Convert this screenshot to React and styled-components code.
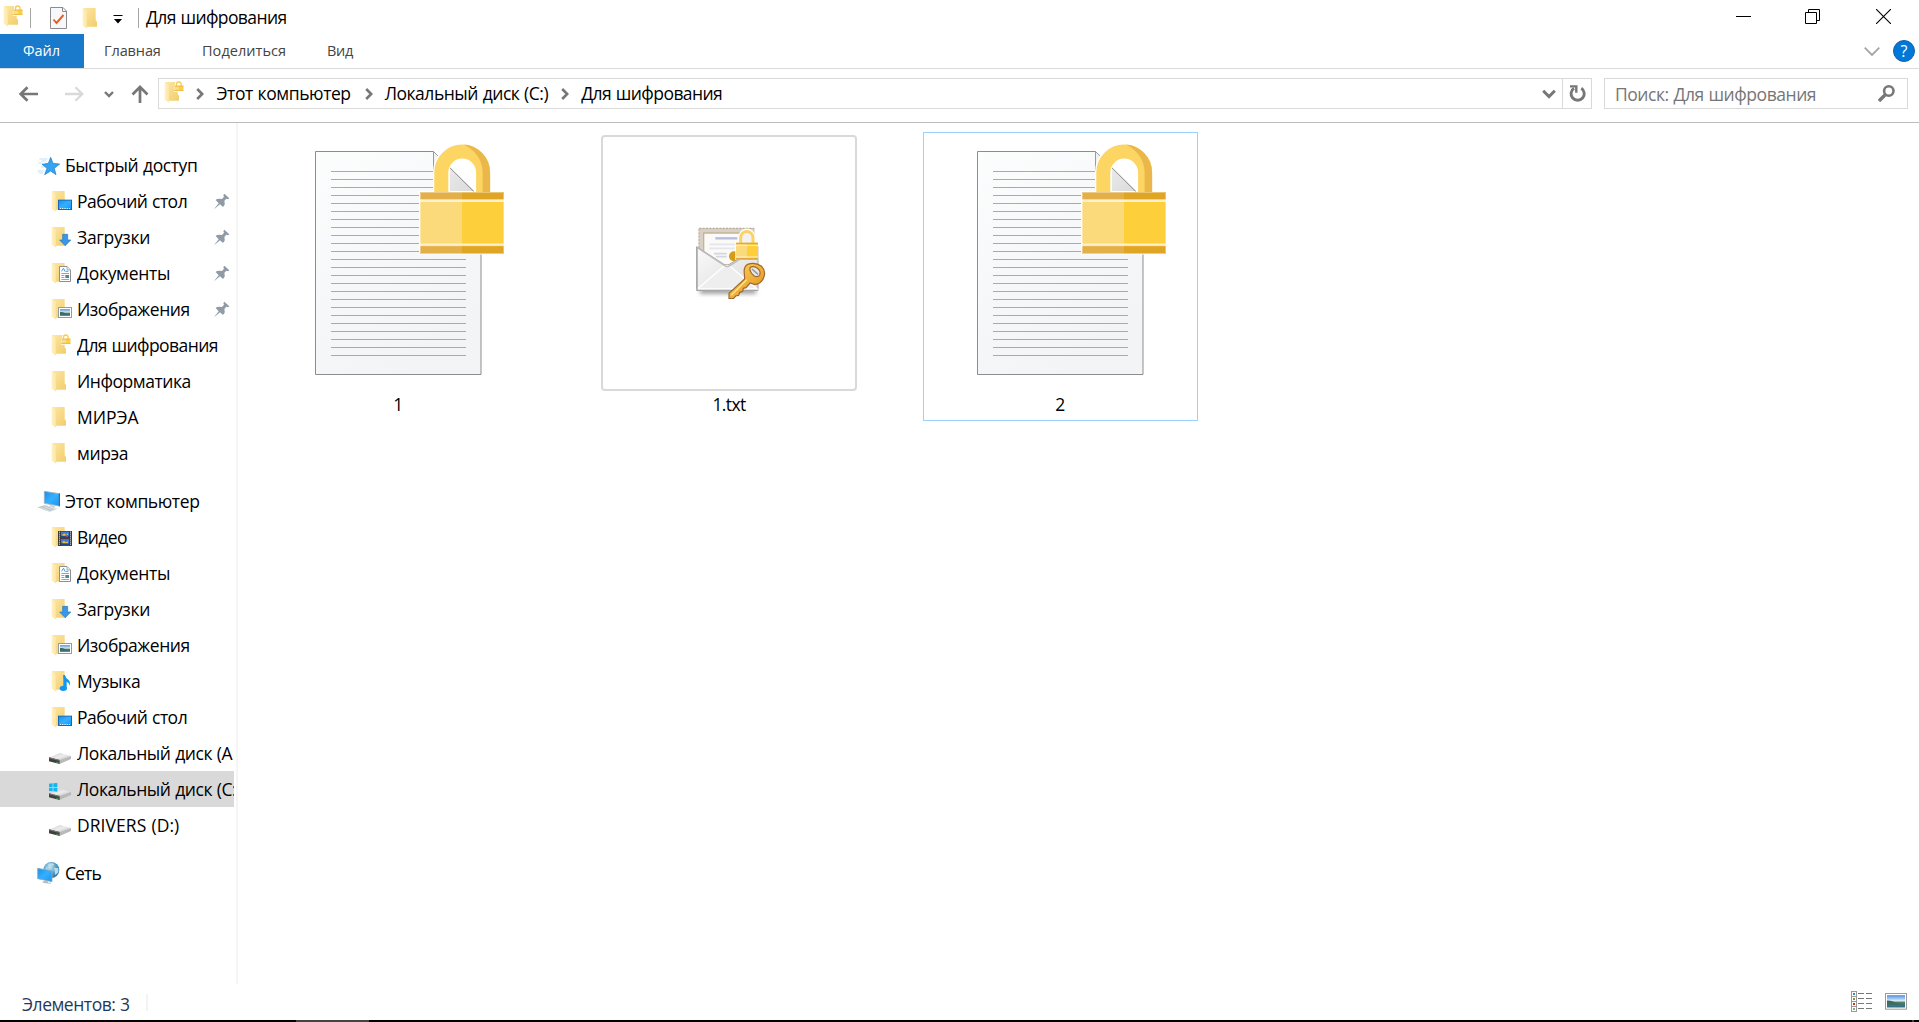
import React from "react";
import styled, { createGlobalStyle } from "styled-components";

const GlobalStyle = createGlobalStyle`
  * { box-sizing: border-box; }
  html, body { margin: 0; padding: 0; background: #fff; overflow: hidden; }
  body { font-family: "Open Sans", "Noto Sans", sans-serif; color: #000; }
  svg { display: block; flex: none; }
`;

const Window = styled.div`
  width: 100vw;
  height: 100vh;
  display: flex;
  flex-direction: column;
  background: #fff;
`;

const Text = styled.span`
  font-size: ${(p) => p.$size || 17.5}px;
  line-height: 24px;
  letter-spacing: ${(p) => p.$spacing ?? -0.42}px;
  word-spacing: 0.6px;
  white-space: nowrap;
`;
const RaisedText = styled(Text)`
  padding-bottom: 2px;
`;

/* ---------- title bar ---------- */
const TitleBar = styled.header`
  height: 34px;
  padding: 2px 28px 0 3px;
  display: flex;
  align-items: center;
`;
const AppIcon = styled.div`
  margin-bottom: 4px;
`;
const Separator = styled.i`
  width: 1px;
  height: 20px;
  background: #a5a5a5;
  margin: 0 ${(p) => p.$after}px 0 ${(p) => p.$before}px;
`;
const CheckButton = styled.div`
  margin-right: 15px;
`;
const MenuArrow = styled.div`
  margin: 3px 15px 0 7px;
`;
const WindowControls = styled.div`
  margin-left: auto;
  margin-bottom: 3px;
  display: flex;
`;
const ControlIcon = styled.div`
  margin-left: ${(p) => p.$gap}px;
`;

/* ---------- ribbon ---------- */
const Ribbon = styled.nav`
  height: 35px;
  display: flex;
  align-items: stretch;
  border-bottom: 1px solid #dadbdc;
  padding-right: 4px;
`;
const FileTab = styled.div`
  width: 84px;
  background: #1979ca;
  color: #fff;
  display: flex;
  align-items: center;
  justify-content: center;
  padding-right: 1px;
`;
const Tab = styled.div`
  width: ${(p) => p.$width}px;
  padding-left: 20px;
  color: #444;
  display: flex;
  align-items: center;
`;
const RibbonTools = styled.div`
  margin-left: auto;
  display: flex;
  align-items: center;
  gap: 13px;
`;
const HelpButton = styled.div`
  width: 22px;
  height: 22px;
  border-radius: 50%;
  background: #0178d7;
  border: 1px solid #1060a8;
  color: #fff;
  font-size: 16px;
  line-height: 20px;
  text-align: center;
`;

/* ---------- address row ---------- */
const NavRow = styled.div`
  height: 54px;
  padding: 0 11px 4px 19px;
  display: flex;
  align-items: center;
  border-bottom: 1px solid #bcbcbc;
`;
const Arrow = styled.div`
  margin-right: ${(p) => p.$gap}px;
  padding-top: 1px;
`;
const AddressBox = styled.div`
  flex: 1;
  height: 31px;
  border: 1px solid #d9d9d9;
  display: flex;
  align-items: center;
  padding-left: 5px;
`;
const AddressIcon = styled.div`
  padding-bottom: 3px;
`;
const Crumb = styled.div`
  display: flex;
  align-items: center;
  gap: ${(p) => p.$gap}px;
  margin-left: ${(p) => p.$before}px;
`;
const HistoryArrow = styled.div`
  margin-left: auto;
  margin-right: 6px;
`;
const RefreshButton = styled.div`
  width: 29px;
  height: 29px;
  border-left: 1px solid #d9d9d9;
  padding-left: 6px;
  display: flex;
  align-items: center;
`;
const SearchBox = styled.div`
  width: 304px;
  height: 31px;
  margin-left: 12px;
  border: 1px solid #d9d9d9;
  padding: 0 12px 0 10px;
  color: #767676;
  display: flex;
  align-items: center;
  justify-content: space-between;
`;

/* ---------- body ---------- */
const Body = styled.div`
  flex: 1;
  display: flex;
  min-height: 0;
`;
const Sidebar = styled.aside`
  width: 238px;
  padding-top: 24px;
  border-right: 2px solid #f5f5f5;
  margin-bottom: 1px;
`;
const Group = styled.section`
  width: 234px;
  margin-bottom: 12px;
`;
const Row = styled.div`
  height: 36px;
  display: flex;
  align-items: center;
  overflow: hidden;
  padding-left: ${(p) => (p.$root ? 36 : p.$drive ? 48 : 51)}px;
  gap: ${(p) => (p.$root ? 4 : p.$drive ? 5 : 2)}px;
  background: ${(p) => (p.$selected ? "#d9d9d9" : "transparent")};
`;
const RowLabel = styled(Text)`
  flex: 1;
  min-width: 0;
  overflow: hidden;
`;
const PinSlot = styled.div`
  margin-right: 4px;
`;

const Files = styled.main`
  flex: 1;
  display: flex;
  align-items: flex-start;
  gap: 56px;
  padding: 9px 0 0 23px;
`;
const Tile = styled.div`
  width: 275px;
  height: 289px;
  border: 1px solid ${(p) => (p.$focused ? "#99d1ff" : "transparent")};
  padding: 2px 0 0 8px;
  display: flex;
  flex-direction: column;
`;
const Thumb = styled.div`
  width: 256px;
  height: 256px;
  border: ${(p) => (p.$framed ? "2px solid #d9d9d9" : "0")};
  border-radius: 4px;
  padding-left: ${(p) => (p.$framed ? 4 : 0)}px;
  display: flex;
  align-items: center;
  justify-content: center;
`;
const FileName = styled(Text)`
  width: 256px;
  padding-top: 1px;
  text-align: center;
`;

/* ---------- status bar ---------- */
const StatusBar = styled.footer`
  height: 35px;
  padding: 0 12px 0 22px;
  display: flex;
  align-items: center;
  color: #1e395b;
`;
const StatusDivider = styled.i`
  width: 2px;
  height: 17px;
  margin-left: auto;
  background: #f3f3f3;
`;
const StatusInfo = styled.div`
  width: 126px;
  display: flex;
  align-items: center;
`;
const StatusText = styled(Text)`
  padding-top: 2px;
`;
const ViewModes = styled.div`
  margin-left: auto;
  display: flex;
  align-items: center;
  gap: 13px;
  padding-bottom: 3px;
`;
const TaskbarEdge = styled.div`
  height: 2px;
  background: #000;
  display: flex;
  justify-content: space-between;
  padding: 0 5px 0 296px;
`;
const EdgeMark = styled.i`
  width: ${(p) => p.$width}px;
  height: 2px;
  background: #444;
`;

/* ---------- small icons ---------- */
const Defs = () => (
  <svg width="0" height="0" aria-hidden="true">
    <defs>
      <linearGradient id="folderBack" x1="0" y1="0" x2="1" y2="1">
        <stop offset="0" stopColor="#fde7a5" /><stop offset="1" stopColor="#f2cd6b" />
      </linearGradient>
      <linearGradient id="folderFlap" x1="0" y1="0" x2="1" y2="0">
        <stop offset="0" stopColor="#fff2c4" /><stop offset="1" stopColor="#fce49c" />
      </linearGradient>
      <linearGradient id="screen" x1="0" y1="0" x2="1" y2="1">
        <stop offset="0" stopColor="#1590f0" /><stop offset=".5" stopColor="#35b0ff" /><stop offset="1" stopColor="#1596f5" />
      </linearGradient>
      <linearGradient id="driveTop" x1="0" y1="0" x2="1" y2="1">
        <stop offset="0" stopColor="#c9c9c9" /><stop offset=".5" stopColor="#ececec" /><stop offset="1" stopColor="#b5b5b5" />
      </linearGradient>
      <linearGradient id="paper" x1="0" y1="0" x2=".5" y2="1">
        <stop offset="0" stopColor="#fcfdfd" /><stop offset=".5" stopColor="#f7f8f9" /><stop offset="1" stopColor="#f3f4f6" />
      </linearGradient>
      <linearGradient id="fold" x1="0" y1="0" x2="1" y2="1">
        <stop offset="0" stopColor="#f4f4f4" /><stop offset="1" stopColor="#d6d6d6" />
      </linearGradient>
      <linearGradient id="photo" x1="0" y1="0" x2="0" y2="1">
        <stop offset="0" stopColor="#4a8fe0" /><stop offset=".45" stopColor="#d9ecfa" /><stop offset=".6" stopColor="#4d7d62" /><stop offset="1" stopColor="#2f6d94" />
      </linearGradient>
      <linearGradient id="envelope" x1="0" y1="0" x2="1" y2="1">
        <stop offset="0" stopColor="#fafafa" /><stop offset="1" stopColor="#dcdcdc" />
      </linearGradient>
      <linearGradient id="keyGold" x1="0" y1="0" x2="1" y2="1">
        <stop offset="0" stopColor="#ffd95e" /><stop offset="1" stopColor="#e08a1c" />
      </linearGradient>
      <radialGradient id="globe" cx=".4" cy=".35" r=".7">
        <stop offset="0" stopColor="#c4e6f4" /><stop offset=".6" stopColor="#4f9cc4" /><stop offset="1" stopColor="#2f6f9c" />
      </radialGradient>
      <filter id="soft" x="-20%" y="-50%" width="140%" height="200%"><feGaussianBlur stdDeviation="6" /></filter>
    </defs>
  </svg>
);

const Picture = ({ x, y, w, h }) => (
  <g>
    <rect x={x} y={y} width={w} height={h} fill="#fff" stroke="#9a9a9a" strokeWidth="3" />
    <rect x={x + 4.5} y={y + 5} width={w - 9} height={h - 10} fill="url(#photo)" />
    <path d={`M${x + 4.5} ${y + h * 0.45}q${w * 0.2} -1 ${w * 0.4} ${h * 0.13}l${w * 0.3} ${h * 0.12}h-${w * 0.7}z`} fill="#3f6b5c" />
  </g>
);

const overlays = {
  lock: (
    <g>
      <path d="M30 16h3v-4a11 11 0 0 1 24 0v4h3v19H30z" fill="#fff" />
      <path d="M37.500 18v-5a7 7 0 0 1 14 0v5" fill="none" stroke="#f6cb58" strokeWidth="4" />
      <rect x="31" y="17" width="27" height="16" fill="#fbdc84" />
      <rect x="44.500" y="17" width="13.500" height="16" fill="#fccf45" />
      <path d="M31 18.500h27M31 31.500h27" stroke="#edbd4b" strokeWidth="3" />
    </g>
  ),
  desktop: (
    <g>
      <rect x="22.500" y="33.500" width="39" height="28" fill="url(#screen)" stroke="#1268b4" strokeWidth="3" />
      <path d="M27 58.500h3M33 58.500h18M54 58.500h3" stroke="#fff" strokeWidth="2.500" strokeDasharray="3 2" />
    </g>
  ),
  downloads: <path d="M35 28h15v17h9.500L42.500 62 26 45h9z" fill="#3a97e8" stroke="#2477c0" strokeWidth="2" />,
  documents: (
    <g>
      <path d="M25.500 16.500H48l10.500 10.500v34.500h-33z" fill="#fff" stroke="#8e8e8e" strokeWidth="3" />
      <path d="M48 17v10h10" fill="#eee" stroke="#8e8e8e" strokeWidth="2" />
      <path d="M32 31l4-8h3l2 8M43 31h9" stroke="#2a8fdc" strokeWidth="2.500" fill="none" />
      <path d="M31 37.500h23M31 43.500h9M31 49.500h9M31 55.500h23" stroke="#4aa0e0" strokeWidth="2.500" />
      <rect x="43" y="42" width="11" height="9" fill="#4f8a8a" />
    </g>
  ),
  pictures: <Picture x={22.5} y={31.5} w={39} h={30} />,
  video: (
    <g>
      <rect x="21" y="18" width="42" height="45" fill="#3c3c3c" />
      <rect x="30" y="20" width="24" height="19" fill="#3f78d8" />
      <rect x="30" y="42" width="24" height="19" fill="#3f78d8" />
      <path d="M30 33h24v6H30zM30 55h24v6H30z" fill="#24458c" />
      <path d="M33 29l8-4 4 5 6-5v7H36zM33 51l6-4 6 5 6-3v6H36z" fill="#e9b93a" />
      <path d="M44 30h7v5h-7z" fill="#c94a3a" />
      <path d="M25.500 20v42M58.500 20v42" stroke="#e8e8e8" strokeWidth="3" strokeDasharray="3 3" />
    </g>
  ),
  music: (
    <g fill="#1296f0">
      <path d="M37 18h5q2 10 10 14 7 5 4 18-1-9-9-12v18h-5z" />
      <ellipse cx="37" cy="58" rx="11" ry="8" />
      <path d="M37 18h5v35h-5z" />
    </g>
  ),
};

const FolderIcon = ({ overlay }) => (
  <svg width="24" height="24" viewBox="0 0 72 72">
    <path d="M4 6h37v37l4 4v15H15z" fill="url(#folderBack)" />
    <path d="M2 6l13 8v48l1 6L2 59z" fill="url(#folderFlap)" />
    {overlays[overlay]}
  </svg>
);

const DriveIcon = ({ system }) => (
  <svg width="24" height="24" viewBox="0 0 72 72">
    <path d="M3 50L36 36l33 9-34 13z" fill="url(#driveTop)" />
    <path d="M35 57l34-12v9L35 69z" fill="#b9b9b9" />
    <path d="M3 49l32 8v12L3 61z" fill="#3f3f3f" />
    <path d="M3 49l32 8v3L3 52z" fill="#777" />
    <path d="M24 62l7 2v2l-7-2z" fill="#35d04a" />
    {system && <path d="M3 20l11-1v11H3zM16 19l12-1v12H16zM3 32h11v11L3 42zM16 32h12v12l-12-1z" fill="#12b6f0" />}
  </svg>
);

const StarIcon = () => (
  <svg width="25" height="24" viewBox="0 0 75 72">
    <path d="M10 18h24M16 24h15M7 30h12M15 42h10M5 54h18M9 60h12" stroke="#b4dbf6" strokeWidth="2.500" />
    <path d="M44 13l7 18 20 2-16 13 5 19-16-11-18 11 7-19-15-12 19-3z" fill="#33a4f4" stroke="#1b7ac8" strokeWidth="2" />
  </svg>
);
const ComputerIcon = () => (
  <svg width="25" height="24" viewBox="0 0 75 72">
    <path d="M25 7l45 7v37l-45-8z" fill="url(#screen)" stroke="#9fb0bd" strokeWidth="2.500" />
    <path d="M70 13v39" stroke="#1c5c94" strokeWidth="3" />
    <path d="M42 48l14 3-1 9-13-3z" fill="#c3cbd1" />
    <path d="M3 55l26-8 37 12-23 10z" fill="#e1e5e8" />
    <path d="M8 56l20-6M15 58l20-6M22 61l20-6M29 64l20-6M37 66l18-6" stroke="#a5b2bd" strokeWidth="2" />
  </svg>
);
const NetworkIcon = () => (
  <svg width="25" height="24" viewBox="0 0 75 72">
    <circle cx="46" cy="27" r="24" fill="url(#globe)" />
    <path d="M36 9q10-5 20 0l-8 8-10 2zM54 20l13 2v12l-9 8zM30 18l6 6-8 4z" fill="#b9dcec" />
    <path d="M5 22l43 8v32L5 53z" fill="url(#screen)" stroke="#93a7b5" strokeWidth="2.500" />
    <path d="M26 59l10 2v4h8v4l-24-4v-3z" fill="#b5bec5" />
  </svg>
);
const PinIcon = () => (
  <svg width="16" height="17" viewBox="643 158 48 51">
    <path d="M643 207l14-18-9-10 4-3q8-2 15 0l6-7-2-5 3-4 15 14-4 3-5-2-6 7q3 8-1 15l-4 2-8-7z" fill="#909ba5" />
  </svg>
);
const ChevronRight = () => (
  <svg width="8" height="12" viewBox="0 0 8 12">
    <path d="M1.200 1l5 5-5 5" fill="none" stroke="#777" strokeWidth="2.600" />
  </svg>
);

/* ---------- large icons ---------- */
const textLines = Array.from({ length: 24 }, (_, i) => ({
  y: 36 + i * 8,
  end: i < 3 ? 163 : i < 11 ? 149 : 196,
}));

const LockedDocument = () => (
  <svg width="256" height="256" viewBox="0 0 256 256">
    <path d="M45.500 16.500H163.500l47.500 47.500V239.500H45.500z" fill="url(#paper)" stroke="#8b8d8f" />
    <path d="M163.500 16.500V64h47.500z" fill="url(#fold)" stroke="#9b9b9b" />
    {textLines.map((l) => <rect key={l.y} x="61" y={l.y} width={l.end - 61} height="1" fill="#a9aaab" />)}
    <path d="M163 57V37a29.200 29.200 0 0 1 58.400 0V57H235v62.500H149V56h14zM180 56h24.500L180 32.500z" fill="#fff" fillRule="evenodd" />
    <path d="M180 32.800L204 56.500" stroke="#9b9b9b" />
    <path d="M171.300 58V37.500a20.900 20.900 0 0 1 41.800 0V58" fill="none" stroke="#fdd563" strokeWidth="14" />
    <path d="M194 9.600a27.800 27.800 0 0 1 26.100 28V58h-7.500V37.500Q212 19 194 9.600z" fill="#eab84a" />
    <path d="M150 57h42v61.700h-42z" fill="#fbda7c" />
    <path d="M192 57h42v61.700h-42z" fill="#fccf3b" />
    <path d="M150 57h42v7.500h-42zM150 111.300h42v7.400h-42z" fill="#e3af49" />
    <path d="M192 57h42v7.500h-42zM192 111.300h42v7.400h-42z" fill="#e0a524" />
    <path d="M150 65.700h84M150 109.600h84" stroke="#fdf0cc" strokeWidth="2.400" />
    <path d="M150.500 57.500h83v61h-83z" fill="none" stroke="#fff" strokeOpacity=".35" />
  </svg>
);

const LockedLetter = () => (
  <svg width="70" height="72" viewBox="318 322 210 216">
    <rect x="330" y="506" width="168" height="16" fill="#999" filter="url(#soft)" />
    <path d="M326 325h168v110H326z" fill="#d9d0c3" />
    <path d="M328 326h164" stroke="#b5ab9d" strokeWidth="4" strokeDasharray="6 4" />
    <path d="M327 328v60" stroke="#b5ab9d" strokeWidth="3" strokeDasharray="6 4" />
    <path d="M341 340h140v95H341z" fill="#fbfaf6" stroke="#c2b59f" strokeWidth="4" />
    <path d="M376 356h66" stroke="#b5bde0" strokeWidth="7" />
    <path d="M358 374h80M358 386h76" stroke="#e3e6ef" strokeWidth="5" />
    <path d="M372 402h38M378 411h32" stroke="#d3d6e3" strokeWidth="5" />
    <circle cx="432" cy="410" r="15" fill="#d79c14" />
    <path d="M320 381l90 58 94-58v131H320z" fill="url(#envelope)" stroke="#a8a8a8" strokeWidth="3" />
    <path d="M322 508l80-68q8-6 18 0l82 68z" fill="#eee" stroke="#fff" strokeWidth="4" />
    <path d="M322 384l82 54q8 5 16 0l82-54" fill="none" stroke="#bcbcbc" strokeWidth="4" />
    <path d="M321 382v130h182" fill="none" stroke="#a5a5a5" strokeWidth="4" />
    <path d="M445 368v-16a25 25 0 0 1 51 0v16h9v53h-69v-53z" fill="#fff" />
    <path d="M452 370v-16a18.500 18.500 0 0 1 37 0v16" fill="#f2f2f2" stroke="#fbd263" strokeWidth="9" />
    <path d="M438 369h33v51h-33z" fill="#fbda7c" />
    <path d="M471 369h33v51h-33z" fill="#fccf3b" />
    <path d="M438 371.500h66M438 417.500h66" stroke="#e0a93a" strokeWidth="5" />
    <path d="M438 377h66M438 412h66" stroke="#fdf0cc" strokeWidth="3" />
    <path d="M463 462q-3-20 10-28 22-8 42 6 14 14 6 34-8 20-28 20l-13-4-12 14-8 2-2 9-9 3-3 9-9 2-7 8h-13v-16l47-43z" fill="url(#keyGold)" stroke="#a0682a" strokeWidth="3.500" />
    <path d="M424 527l46-47" stroke="#ffe488" strokeWidth="4" />
    <path d="M480 444q8-6 20 0 14 9 9 22-6 9-17 2-14-11-12-24z" fill="#e8e8e8" stroke="#a0682a" strokeWidth="3.500" />
    <path d="M486 448l18 16" stroke="#999" strokeWidth="5" />
  </svg>
);

/* ---------- data ---------- */
const quickAccess = [
  { label: "Рабочий стол", overlay: "desktop", pinned: true, spacing: -0.52 },
  { label: "Загрузки", overlay: "downloads", pinned: true, spacing: -0.32 },
  { label: "Документы", overlay: "documents", pinned: true, spacing: -0.3 },
  { label: "Изображения", overlay: "pictures", pinned: true, spacing: -0.46 },
  { label: "Для шифрования", overlay: "lock", spacing: -0.58 },
  { label: "Информатика", spacing: -0.46 },
  { label: "МИРЭА", spacing: -0.05 },
  { label: "мирэа", spacing: -0.4 },
];
const computer = [
  { label: "Видео", overlay: "video", spacing: -0.6 },
  { label: "Документы", overlay: "documents", spacing: -0.3 },
  { label: "Загрузки", overlay: "downloads", spacing: -0.32 },
  { label: "Изображения", overlay: "pictures", spacing: -0.46 },
  { label: "Музыка", overlay: "music", spacing: -0.3 },
  { label: "Рабочий стол", overlay: "desktop", spacing: -0.52 },
  { label: "Локальный диск (A", drive: true, spacing: -0.45 },
  { label: "Локальный диск (C:)", drive: true, system: true, selected: true, spacing: -0.45 },
  { label: "DRIVERS (D:)", drive: true, spacing: 0.05 },
];

const Item = ({ item }) => (
  <Row $drive={item.drive} $selected={item.selected}>
    {item.drive ? <DriveIcon system={item.system} /> : <FolderIcon overlay={item.overlay} />}
    <RowLabel $spacing={item.spacing}>{item.label}</RowLabel>
    {item.pinned && <PinSlot><PinIcon /></PinSlot>}
  </Row>
);

export default function App() {
  return (
    <Window>
      <GlobalStyle />
      <TitleBar>
        <AppIcon><FolderIcon overlay="lock" /></AppIcon>
        <Separator $before={3} $after={19} />
        <CheckButton>
          <svg width="17" height="22" viewBox="0 0 17 22">
            <path d="M.5.5h12.500l3.500 3.500v17.500H.5z" fill="#f7f8fa" stroke="#8c8c8c" />
            <path d="M12.500.5v4h4" fill="none" stroke="#8c8c8c" />
            <path d="M3.500 12.500l3 3.500 7-8" fill="none" stroke="#f05a1a" strokeWidth="1.900" />
          </svg>
        </CheckButton>
        <FolderIcon />
        <MenuArrow>
          <svg width="10" height="9" viewBox="0 0 10 9">
            <path d="M.5 0h9v1h-9zM1 4h8L5 8.500z" fill="#000" />
          </svg>
        </MenuArrow>
        <Separator $before={0} $after={7} />
        <RaisedText $spacing={-0.6}>Для шифрования</RaisedText>
        <WindowControls>
          <ControlIcon $gap={0}><svg width="15" height="15"><path d="M0 7.500h15" stroke="#000" /></svg></ControlIcon>
          <ControlIcon $gap={54}><svg width="15" height="15"><path d="M.5 3.500h11v11H.5zM3.500 3V.5h11v11H12" fill="none" stroke="#000" /></svg></ControlIcon>
          <ControlIcon $gap={56}><svg width="15" height="15"><path d="M0 0l15 15M15 0L0 15" stroke="#000" strokeWidth="1.100" /></svg></ControlIcon>
        </WindowControls>
      </TitleBar>

      <Ribbon>
        <FileTab><Text $size={14.5} $spacing={-0.05}>Файл</Text></FileTab>
        <Tab $width={98}><Text $size={14.5} $spacing={-0.1}>Главная</Text></Tab>
        <Tab $width={125}><Text $size={14.5} $spacing={0.05}>Поделиться</Text></Tab>
        <Tab $width={80}><Text $size={14.5} $spacing={-0.3}>Вид</Text></Tab>
        <RibbonTools>
          <svg width="16" height="9"><path d="M.7.7L8 8 15.300.7" fill="none" stroke="#a5a5a5" strokeWidth="1.800" /></svg>
          <HelpButton>?</HelpButton>
        </RibbonTools>
      </Ribbon>

      <NavRow>
        <Arrow $gap={27}>
          <svg width="19" height="16"><path d="M19 8H2M8.500 1.200L1.700 8l6.800 6.800" fill="none" stroke="#777" strokeWidth="2.700" /></svg>
        </Arrow>
        <Arrow $gap={20}>
          <svg width="19" height="16"><path d="M0 8h17M10.500 1.200L17.300 8l-6.800 6.800" fill="none" stroke="#d9d9d9" strokeWidth="2.300" /></svg>
        </Arrow>
        <Arrow $gap={17}>
          <svg width="10" height="7"><path d="M1 1l4 4 4-4" fill="none" stroke="#777" strokeWidth="2.400" /></svg>
        </Arrow>
        <Arrow $gap={9}>
          <svg width="18" height="18"><path d="M9 18V2M1.500 9.500L9 2l7.500 7.500" fill="none" stroke="#777" strokeWidth="2.700" /></svg>
        </Arrow>
        <AddressBox>
          <AddressIcon><FolderIcon overlay="lock" /></AddressIcon>
          <Crumb $before={8} $gap={12.5}><ChevronRight /><RaisedText $spacing={-0.42}>Этот компьютер</RaisedText></Crumb>
          <Crumb $before={14} $gap={12}><ChevronRight /><RaisedText $spacing={-0.47}>Локальный диск (C:)</RaisedText></Crumb>
          <Crumb $before={13} $gap={12}><ChevronRight /><RaisedText $spacing={-0.56}>Для шифрования</RaisedText></Crumb>
          <HistoryArrow>
            <svg width="14" height="10"><path d="M1.200 1.800L7 7.600l5.800-5.800" fill="none" stroke="#777" strokeWidth="3" /></svg>
          </HistoryArrow>
          <RefreshButton>
            <svg width="18" height="18" viewBox="0 0 18 18">
              <path d="M12.300 3.200A6.600 6.600 0 1 1 5 3.200" fill="none" stroke="#777" strokeWidth="2.900" />
              <path d="M1 1.400h6.300v6.400" fill="none" stroke="#777" strokeWidth="2.400" />
            </svg>
          </RefreshButton>
        </AddressBox>
        <SearchBox>
          <Text $spacing={-0.45}>Поиск: Для шифрования</Text>
          <svg width="17" height="17" viewBox="0 0 17 17">
            <circle cx="10.800" cy="6" r="4.700" fill="none" stroke="#777" strokeWidth="2.600" />
            <path d="M7.500 9.500L1 16" stroke="#777" strokeWidth="3.400" />
          </svg>
        </SearchBox>
      </NavRow>

      <Body>
        <Sidebar>
          <Group>
            <Row $root><StarIcon /><RowLabel $spacing={-0.4}>Быстрый доступ</RowLabel></Row>
            {quickAccess.map((i) => <Item key={i.label} item={i} />)}
          </Group>
          <Group>
            <Row $root><ComputerIcon /><RowLabel $spacing={-0.4}>Этот компьютер</RowLabel></Row>
            {computer.map((i) => <Item key={i.label} item={i} />)}
          </Group>
          <Group>
            <Row $root><NetworkIcon /><RowLabel $spacing={-0.9}>Сеть</RowLabel></Row>
          </Group>
        </Sidebar>
        <Files>
          <Tile>
            <Thumb><LockedDocument /></Thumb>
            <FileName>1</FileName>
          </Tile>
          <Tile>
            <Thumb $framed><LockedLetter /></Thumb>
            <FileName $spacing={-0.6}>1.txt</FileName>
          </Tile>
          <Tile $focused>
            <Thumb><LockedDocument /></Thumb>
            <FileName>2</FileName>
          </Tile>
        </Files>
      </Body>

      <StatusBar>
        <StatusInfo><StatusText $spacing={-0.46}>Элементов: 3</StatusText><StatusDivider /></StatusInfo>
        <ViewModes>
          <svg width="21" height="21" viewBox="0 0 63 63">
            {["#4f7fb5", "#7a9a3a", "#d0301c", "#7fae7a"].map((c, i) => (
              <g key={c} transform={`translate(0 ${i * 15})`}>
                <rect x="1.500" y="1.500" width="15" height="15" fill="#fff" stroke="#9a9a9a" strokeWidth="3" />
                <rect x="6" y="6" width="6" height="6" fill={c} />
                <path d="M21 7.500h18M45 7.500h18" stroke="#777" strokeWidth="3" />
              </g>
            ))}
          </svg>
          <svg width="22" height="17" viewBox="0 0 66 51"><Picture x={1.5} y={1.5} w={63} h={47} /></svg>
        </ViewModes>
      </StatusBar>
      <TaskbarEdge><EdgeMark $width={73} /><EdgeMark $width={2} /></TaskbarEdge>
      <Defs />
    </Window>
  );
}
